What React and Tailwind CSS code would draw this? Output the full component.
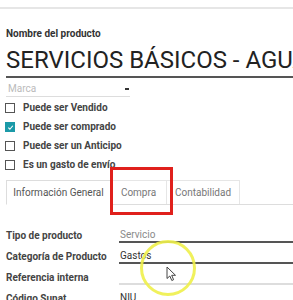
import React from "react";

const FLAGS = [
  { label: "Puede ser Vendido", checked: false },
  { label: "Puede ser comprado", checked: true },
  { label: "Puede ser un Anticipo", checked: false },
  { label: "Es un gasto de envío", checked: false },
];

const FIELDS = [
  { label: "Tipo de producto", value: "Servicio", tone: "text-[#8a8a8a]", line: "border-[#555]" },
  { label: "Categoría de Producto", value: "Gastos", tone: "text-[#333]", line: "border-[#555]" },
  { label: "Referencia interna", value: "", tone: "", line: "border-[#ddd]" },
  { label: "Código Sunat", value: "NIU", tone: "text-[#333]", line: "border-transparent" },
];

function Check({ checked }) {
  if (checked) {
    return (
      <span className="w-[10px] h-[10px] bg-[#1b9aa8] flex items-center justify-center">
        <svg width="7" height="7" viewBox="0 0 8 8">
          <path d="M1.5 4.2 L3.3 6 L6.6 2" fill="none" stroke="#fff" strokeWidth="1.3" />
        </svg>
      </span>
    );
  }
  return <span className="w-[10px] h-[10px] border border-[#555] bg-white" />;
}

export default function App() {
  return (
    <div className="relative w-[293px] h-[300px] overflow-hidden bg-white font-['Roboto',sans-serif] text-[#444]">
      <div className="h-[9px] border-b-2 border-[#e6e6e6]" />

      <div className="pl-[6px] pt-[19px]">
        <div className="text-[10px] font-bold text-[#333] leading-[12px]">Nombre del producto</div>
        <div className="mt-[5px] text-[24px] leading-[30px] text-[#222] whitespace-nowrap border-b-2 border-[#555] pb-[1px]">
          SERVICIOS BÁSICOS - AGUA
        </div>
        <div className="mt-[4px] w-[124px] flex items-center justify-between border-b border-[#ddd] pb-[1px] pl-[2px] pr-[1px]">
          <span className="text-[10px] text-[#bbb] leading-[13px]">Marca</span>
          <span className="w-[4px] h-[2px] bg-[#333]" />
        </div>

        <div className="mt-[6px] flex flex-col gap-[9px] -ml-[1px]">
          {FLAGS.map((f) => (
            <div key={f.label} className="flex items-center gap-[8px] h-[10px]">
              <Check checked={f.checked} />
              <span className="text-[10px] font-bold text-[#444] leading-[10px]">{f.label}</span>
            </div>
          ))}
        </div>

        <div className="mt-[11px] flex items-end h-[24px] border-b border-[#ddd]">
          <div className="h-[25px] w-[105px] border border-[#ddd] border-b-white bg-white flex items-center justify-center text-[10px] text-[#555] -mb-[1px]">
            Información General
          </div>
          <div className="h-[24px] w-[56px] border border-b-0 border-l-0 border-[#e6e6e6] flex items-center justify-center text-[10px] text-[#777]">
            Compra
          </div>
          <div className="h-[24px] w-[73px] border border-b-0 border-l-0 border-[#e6e6e6] flex items-center justify-center text-[10px] text-[#777]">
            Contabilidad
          </div>
        </div>

        <div className="mt-[23px] flex flex-col gap-[6px]">
          {FIELDS.map((f) => (
            <div key={f.label} className="flex items-end h-[15px]">
              <span className="w-[113px] shrink-0 text-[10px] font-bold text-[#444] leading-[13px] pb-[1px]">{f.label}</span>
              <span className={`flex-1 h-[15px] border-b-2 ${f.line} text-[10px] leading-[13px] ${f.tone} pl-[1px]`}>
                {f.value}
              </span>
            </div>
          ))}
        </div>
      </div>

      <div className="absolute left-[110px] top-[167px] w-[63px] h-[48px] border-[3px] border-[#e0201c]" />

      <div className="absolute left-[140px] top-[240px] w-[56px] h-[56px] rounded-full border-[3px] border-[#eef04a]/90" />

      <svg className="absolute left-[166px] top-[266px]" width="12" height="16" viewBox="0 0 12 16">
        <path d="M1 1 L1 12.5 L3.8 10 L5.8 14.5 L7.6 13.7 L5.7 9.3 L9.5 9.3 Z" fill="#fff" stroke="#444" strokeWidth="1" strokeLinejoin="round" />
      </svg>
    </div>
  );
}
